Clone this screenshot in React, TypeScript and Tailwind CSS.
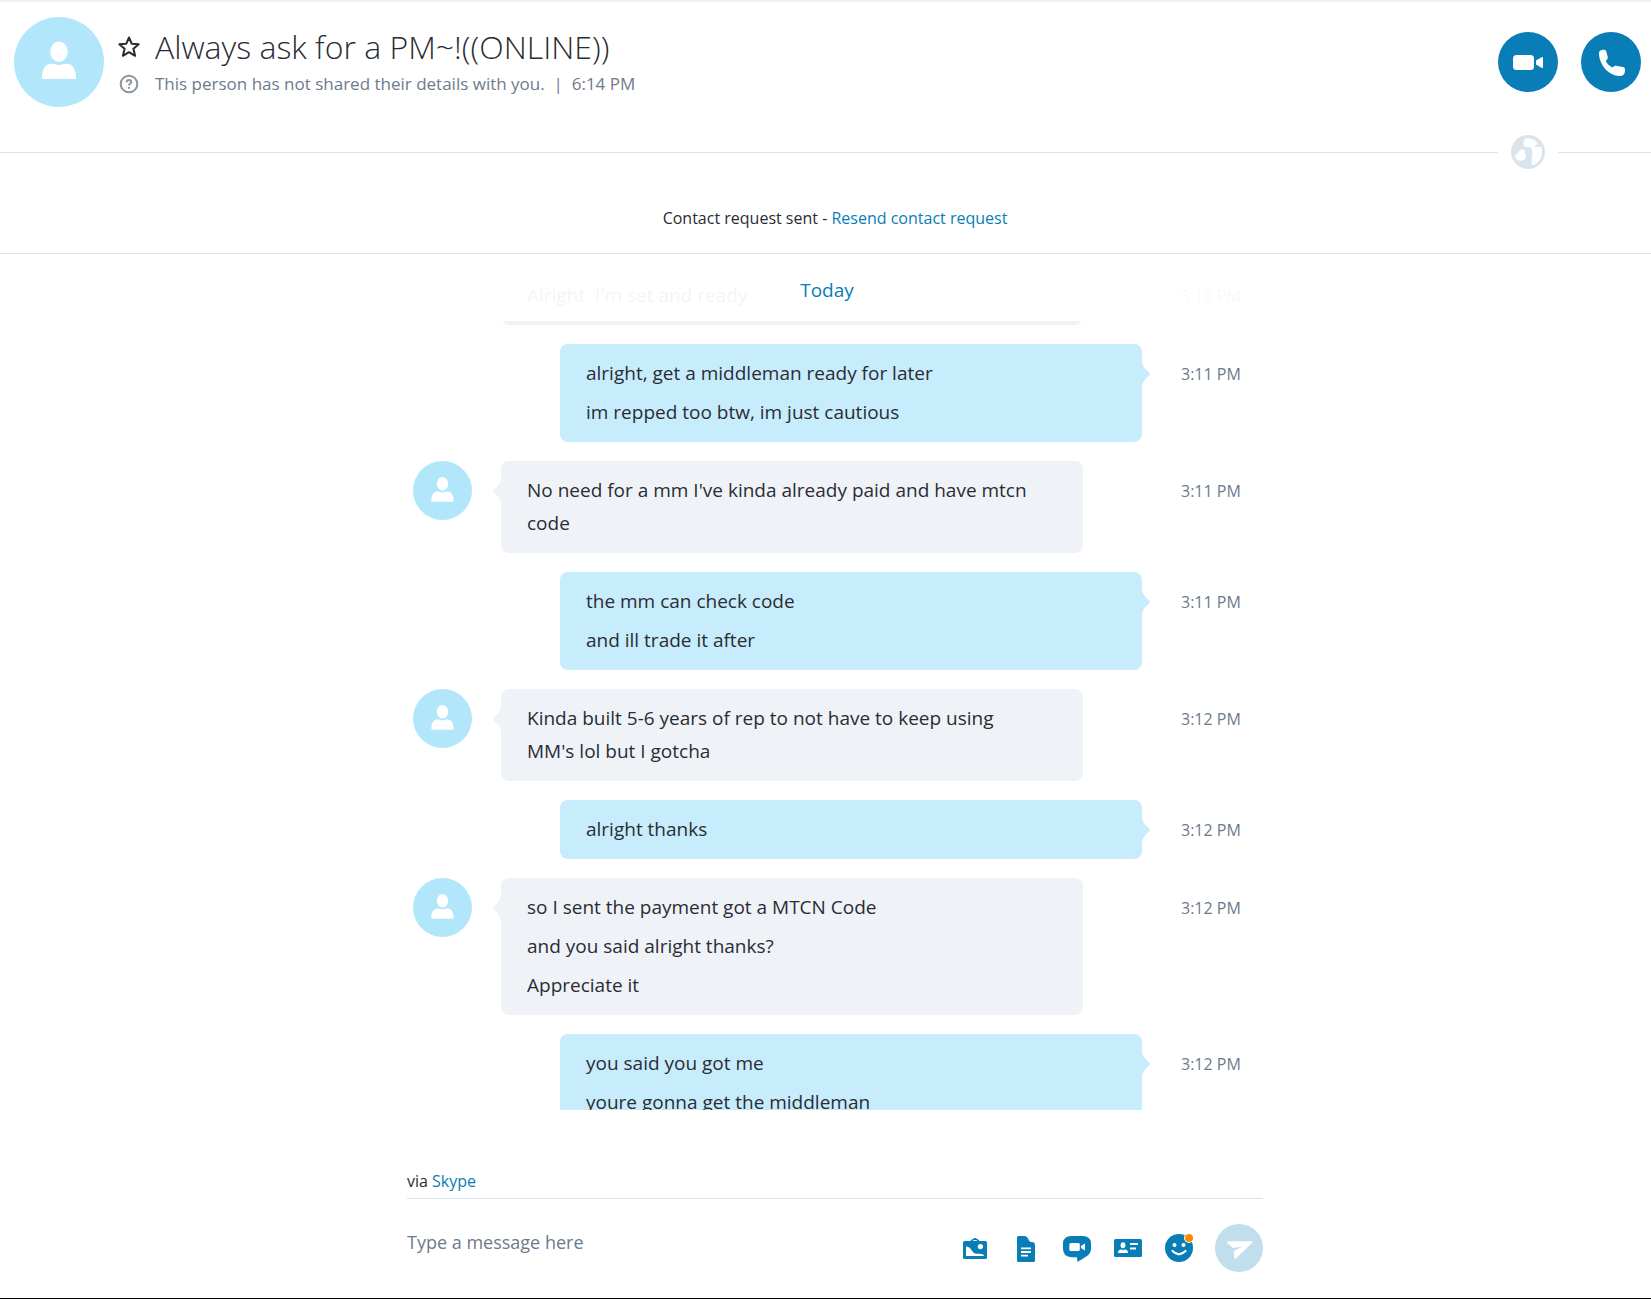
import React from 'react';

type Group = { own: boolean; time: string; lines: string[]; continued?: boolean };

const groups: Group[] = [
  { own: false, time: '3:10 PM', lines: ["Alright  I'm set and ready"], continued: true },
  { own: true, time: '3:11 PM', lines: ['alright, get a middleman ready for later', 'im repped too btw, im just cautious'] },
  { own: false, time: '3:11 PM', lines: ["No need for a mm I've kinda already paid and have mtcn code"] },
  { own: true, time: '3:11 PM', lines: ['the mm can check code', 'and ill trade it after'] },
  { own: false, time: '3:12 PM', lines: ["Kinda built 5-6 years of rep to not have to keep using MM's lol but I gotcha"] },
  { own: true, time: '3:12 PM', lines: ['alright thanks'] },
  { own: false, time: '3:12 PM', lines: ['so I sent the payment got a MTCN Code', 'and you said alright thanks?', 'Appreciate it'] },
  { own: true, time: '3:12 PM', lines: ['you said you got me', 'youre gonna get the middleman'] },
];

function Person({ className }: { className: string }) {
  return (
    <svg viewBox="0 0 90 90" className={className} aria-hidden="true">
      <circle cx="45" cy="45" r="45" fill="#b2e7fb" />
      <ellipse cx="45" cy="34.7" rx="8.7" ry="10.3" fill="#fff" />
      <path d="M28 60.500c0-7.500 3-13.800 9.500-13.800 3 0 4.500 1.200 7.500 1.200s4.500-1.200 7.500-1.200c6.500 0 9.500 6.300 9.500 13.800q0 1.500-1.500 1.500h-31q-1.500 0-1.500-1.500z" fill="#fff" />
    </svg>
  );
}

function Tail({ own }: { own: boolean }) {
  return (
    <svg
      viewBox="0 0 8 24"
      className={own ? 'absolute left-full top-[18px] h-6 w-2' : 'absolute right-full top-[18px] h-6 w-2 -scale-x-100'}
      aria-hidden="true"
    >
      <path d="M0 0C1 5 4 8 6.500 9.800Q9.500 12 6.500 14.200C4 16 1 19 0 24z" fill={own ? '#c7ecfc' : '#eff3f8'} />
    </svg>
  );
}

function Row({ group }: { group: Group }) {
  return (
    <li className="flex pl-[6px]">
      <div className="w-[88px] shrink-0">{!group.own && !group.continued && <Person className="size-[59px]" />}</div>
      <div className={group.own ? 'flex min-w-0 flex-1 pl-[59px]' : 'flex min-w-0 flex-1 pr-[59px]'}>
        <div className={group.own ? 'relative flex flex-1 flex-col gap-[6px] rounded-lg bg-[#c7ecfc] py-[13px] pl-[26px] pr-[52px]' : 'relative flex flex-1 flex-col gap-[6px] rounded-lg bg-[#eff3f8] py-[13px] pl-[26px] pr-[52px]'}>
          {group.lines.map((line) => (
            <p key={line} className="whitespace-pre-wrap text-[19px] leading-[33px] text-[#2b2c33]">{line}</p>
          ))}
          {!group.continued && <Tail own={group.own} />}
        </div>
      </div>
      <time className="w-[121px] shrink-0 pl-[39px] pt-[14px] text-base leading-[33px] text-[#6e7a8c]">{group.time}</time>
    </li>
  );
}

export default function App() {
  return (
    <div className="flex h-screen flex-col overflow-hidden border-b border-t-2 border-b-black border-t-[#f0f0f0] bg-white font-['Open_Sans',sans-serif]">
      <header className="flex items-start justify-between pl-[14px] pr-[10px] pt-[15px]">
        <div className="flex">
          <Person className="size-[90px]" />
          <div className="flex flex-col pl-[14px] pt-2">
            <div className="flex h-[44px] items-center gap-[15px]">
              <button aria-label="Add to favorites">
                <svg viewBox="0 0 22 22" className="size-[22px]" fill="none" stroke="#2b2c33" strokeWidth="2" strokeLinejoin="round" aria-hidden="true">
                  <path d="M11 1.500l2.700 6.200 7 .600-5.300 4.500 1.700 7L11 16.200l-6.100 3.600 1.700-7L1.300 8.300l7-.600z" />
                </svg>
              </button>
              <h1 className="whitespace-nowrap text-[32px] font-light leading-[44px] text-[#2b2c33]">Always ask for a PM~!((ONLINE))</h1>
            </div>
            <div className="flex h-[30px] items-center gap-[15px] text-[17px] leading-[30px] text-[#6e7a8c]">
              <svg viewBox="0 0 22 22" className="size-[22px]" fill="none" stroke="#8d949c" strokeWidth="2" aria-hidden="true">
                <circle cx="11" cy="11" r="8.300" />
                <path d="M8.700 9.200c0-3 4.600-3 4.600-.200 0 1.800-2.300 1.800-2.300 3.400M11 14v1.800" />
              </svg>
              <p className="whitespace-pre">This person has not shared their details with you.  |  6:14 PM</p>
            </div>
          </div>
        </div>
        <div className="flex gap-[23px] pt-[15px]">
          <button aria-label="Video call" className="size-[60px] rounded-full bg-[#087db6]">
            <svg viewBox="0 0 60 60" fill="#fff" aria-hidden="true">
              <rect x="15" y="23" width="21" height="15" rx="3.500" />
              <path d="M38 28.500l5.500-3.300q1.500-.700 1.500.800v9q0 1.500-1.500.800L38 32.500z" />
            </svg>
          </button>
          <button aria-label="Call" className="size-[60px] rounded-full bg-[#087db6]">
            <svg viewBox="0 0 60 60" fill="#fff" aria-hidden="true">
              <path d="M18 21c0-2 2-3.200 4.500-3.200 2.200 0 2.600 1 3.200 3.200l1 3.800c.4 1.800-.2 2.400-1.900 4 1.200 3 3.600 5.400 6.800 6.800 1.600-1.800 2.400-2 4.400-1.700l4.500.8c2.600.4 3.500.8 3.500 3.200 0 4-1.700 6-5.500 6C28 44 18 33 18 21z" />
            </svg>
          </button>
        </div>
      </header>

      <div className="mt-[28px] flex items-center">
        <div className="h-px flex-1 bg-[#d8e5ee]" />
        <button aria-label="Translation" className="px-[13px]">
          <svg viewBox="0 0 34 34" className="size-[34px]" aria-hidden="true">
            <circle cx="17" cy="17" r="17" fill="#d8e4ee" />
            <path d="M13 4.200C17 2.500 22 3.500 25 6.500l2.300 3q-2.300-.4-3.500 1l.5 1.300h6c1.500 5 .5 11-2.300 14.200-2 2.500-4.500 3.800-6.800 4.200-.7-2-.7-4-.2-6l-.5-3c.8-1.200 1-2.400.8-3.800l-.6-4c-2.200-2-5-1.500-7.200-1.500-.8-1.800-.8-2.500-1.500-3.700 1-1.500 2-2.500 1-4z" fill="#fff" />
            <path d="M4 21.500c0-2.500 3-2.800 4-5.500 3.500-3 6.500-1.500 5.800 1.500 2 2.500 1.200 5.500-.8 7.500-3.500 1.500-8 1-9-3.500z" fill="#fff" />
          </svg>
        </button>
        <div className="h-px w-[93px] bg-[#d8e5ee]" />
      </div>

      <div className="border-b border-[#d8e5ee] pb-[21px] pl-[19px] pt-[35px] text-center text-base leading-[28px] text-[#2b2c33]">
        Contact request sent - <a href="#resend" className="text-[#087db6]">Resend contact request</a>
      </div>

      <main className="relative min-h-0 flex-1 overflow-hidden pl-[19px]">
        <ol className="mx-auto flex w-full max-w-[856px] flex-col gap-[19px] pt-3">
          {groups.map((group, i) => (
            <Row key={i} group={group} />
          ))}
        </ol>
        <div className="absolute inset-x-0 top-0 h-[67px] bg-white/95 pl-[3px] pt-[18px] text-center text-[19px] leading-[36px] text-[#087db6]">Today</div>
      </main>

      <footer className="pl-[19px] pt-[57px]">
        <div className="mx-auto max-w-[856px] pb-[26px]">
          <div className="border-b border-[#d8e5ee] pb-[3px] text-base leading-[28px] text-[#2b2c33]">
            via <a href="#skype" className="text-[#087db6]">Skype</a>
          </div>
          <form className="flex items-center gap-[22px] pt-[25px]" onSubmit={(e) => e.preventDefault()}>
            <input
              type="text"
              aria-label="Message"
              placeholder="Type a message here"
              className="mb-[12px] h-9 min-w-0 flex-1 text-[18px] outline-none placeholder:text-[#6e7a8c]"
            />
            <div className="flex items-center gap-[23px]">
              <button type="button" aria-label="Send photo">
                <svg viewBox="0 0 28 28" className="size-7" aria-hidden="true">
                  <path d="M10 7.500q1-1.500 2.500-2 1.500-1 3 0 1.500.5 2.500 2" fill="none" stroke="#087db6" strokeWidth="1.800" />
                  <rect x="2" y="7" width="24" height="18" rx="1.500" fill="#087db6" />
                  <path d="M5 12.500q3.500 0 5.500 3.500c2 3.500 3.500 4 7 3.700q5-.3 5.500 2.300H5z" fill="#fff" />
                  <circle cx="19.400" cy="12.600" r="2.600" fill="#fff" />
                </svg>
              </button>
              <button type="button" aria-label="Send file">
                <svg viewBox="0 0 28 28" className="size-7" aria-hidden="true">
                  <path d="M6.500 2H12.500q2 0 3 1.800l1.700 3q.8 1.200 2.300 1.200 3.500.2 3.500 3v15.500q0 1.500-1.500 1.500h-15Q5 28 5 26.500v-23Q5 2 6.500 2z" fill="#087db6" />
                  <path d="M9 14.300h10M9 18h10M9 21.700h7" stroke="#fff" strokeWidth="1.800" />
                </svg>
              </button>
              <button type="button" aria-label="Send video message">
                <svg viewBox="0 0 28 28" className="size-7" aria-hidden="true">
                  <path d="M8.500 2h11q8.500 0 8.500 8v4.500q0 4.500-4 7.500L14.500 28 14 23.200H8.500q-8.500-.5-8.500-8.700V10q0-8 8.500-8z" fill="#087db6" />
                  <rect x="6.300" y="9" width="10.500" height="8" rx="1.500" fill="#fff" />
                  <path d="M18 12l4-2.500v7L18 14z" fill="#fff" />
                </svg>
              </button>
              <button type="button" aria-label="Send contacts">
                <svg viewBox="0 0 28 28" className="size-7" aria-hidden="true">
                  <rect y="5" width="28" height="18" rx="1.500" fill="#087db6" />
                  <ellipse cx="9" cy="11.200" rx="2.400" ry="3" fill="#fff" />
                  <path d="M4 19q0-3.500 3-3.500 2 .8 4 0 3 0 3 3.500z" fill="#fff" />
                  <path d="M16 10h8M16 14.400h6" stroke="#fff" strokeWidth="2" />
                </svg>
              </button>
              <button type="button" aria-label="Choose an emoticon">
                <svg viewBox="0 0 28 28" className="size-7 overflow-visible" aria-hidden="true">
                  <circle cx="14" cy="14" r="14" fill="#087db6" />
                  <circle cx="9.500" cy="11" r="2" fill="#fff" />
                  <circle cx="18.500" cy="11" r="2" fill="#fff" />
                  <path d="M7.500 17q6.500 6.500 13 0" fill="none" stroke="#fff" strokeWidth="2.200" strokeLinecap="round" />
                  <circle cx="24" cy="4" r="5" fill="#fff" />
                  <circle cx="24" cy="4" r="4" fill="#ff8c00" />
                </svg>
              </button>
            </div>
            <button type="submit" aria-label="Send message" className="size-12 rounded-full bg-[#c1deec]">
              <svg viewBox="0 0 48 48" fill="#fff" aria-hidden="true">
                <path d="M13 17.200h24q1.500 0 .5 1.300L21 34.500q-1.300 1-1.700-.500L18.700 27l9-4.500-9.700 1.500-5.800-5q-1-1.800.8-1.800z" />
              </svg>
            </button>
          </form>
        </div>
      </footer>
    </div>
  );
}
